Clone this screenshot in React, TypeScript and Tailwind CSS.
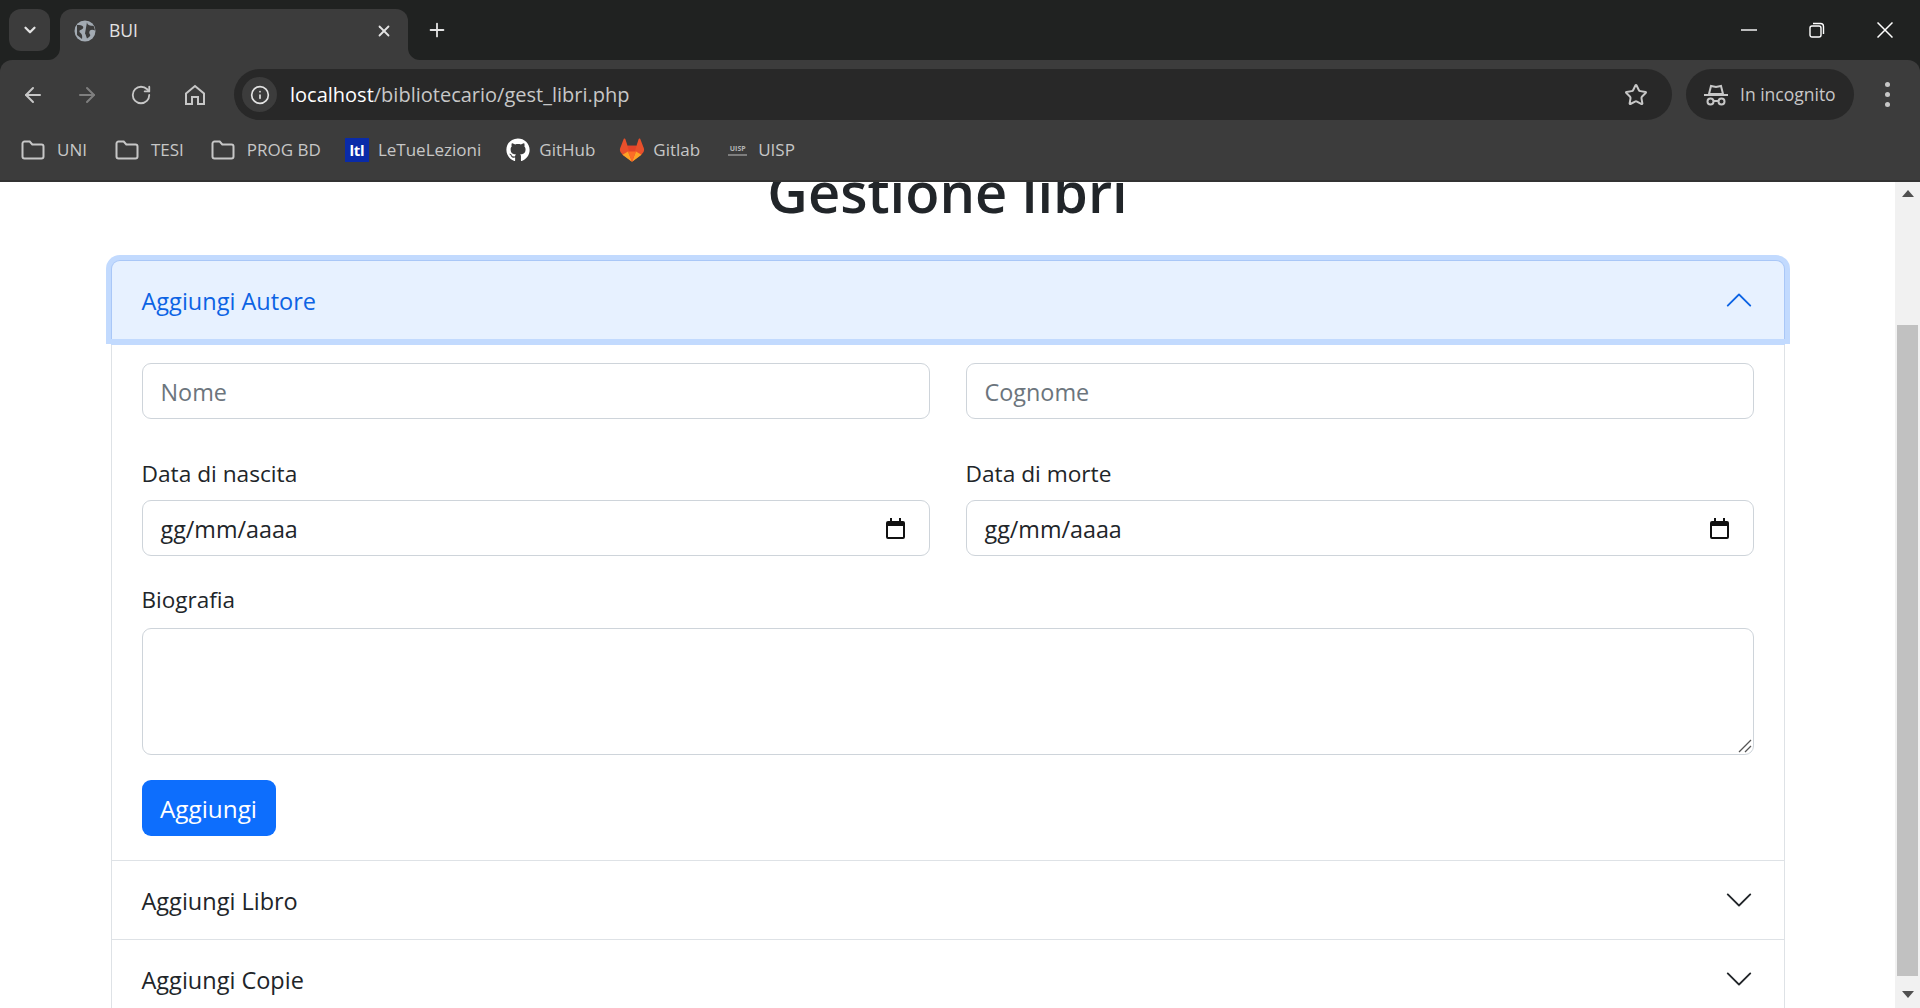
import { FaGithub } from 'react-icons/fa'
import { ArrowLeft, ArrowRight, RotateCw, Star, X, Plus, ChevronDown, Info } from 'lucide-react'

const ui = 'font-["Open_Sans","Liberation_Sans",sans-serif]'

function FolderIcon() {
  return (
    <svg width="24" height="20" viewBox="0 0 24 20" fill="none" stroke="#c7c7c7" strokeWidth="2">
      <path d="M1.5 3.5a2 2 0 0 1 2-2h5.2l2.6 3h9.2a2 2 0 0 1 2 2v10a2 2 0 0 1-2 2h-17a2 2 0 0 1-2-2z" />
    </svg>
  )
}

function Bookmark({ icon, label, className }: { icon: React.ReactNode; label: string; className?: string }) {
  return (
    <div className={`flex items-center ${className ?? ''}`}>
      {icon}
      <span className="pb-[2px] text-[17px] leading-none text-[#c7c7c7]">{label}</span>
    </div>
  )
}

function TabFlare({ side }: { side: 'left' | 'right' }) {
  return (
    <svg
      width="12"
      height="12"
      viewBox="0 0 12 12"
      fill="#3c3c3c"
      className={side === 'left' ? 'absolute -left-[12px] bottom-0' : 'absolute -right-[12px] bottom-0 -scale-x-100'}
    >
      <path d="M12 0v12H0A12 12 0 0 0 12 0z" />
    </svg>
  )
}

function BrowserChrome() {
  return (
    <div className={`w-full shrink-0 bg-[#202221] ${ui}`}>
      <div className="flex h-[60px] items-end pl-[9px]">
        <div className="mb-[9px] flex h-[42px] w-[41px] items-center justify-center rounded-xl bg-[#3c3c3c]">
          <ChevronDown size={18} strokeWidth={3} color="#e3e3e3" />
        </div>
        <div className="relative ml-[10px] flex h-[51px] w-[348px] items-center rounded-t-xl bg-[#3c3c3c] pb-[8px] pl-[14px] pr-[15px]">
          <TabFlare side="left" />
          <TabFlare side="right" />
          <svg width="22" height="22" viewBox="0 0 22 22">
            <circle cx="11" cy="11" r="10.500" fill="#a3abb3" />
            <path d="M3 5c3 0 5 0 6 1.500s-1 3-2.500 3.500S5 12 6.500 13s2 3 1.500 6L3 15z M13 2c0 2 1 3 3 3.500s3 0 4 1l1 4c-2-1-4-1-5 0s-1 3 0 4-1 3-3 4c-1-2-1-4-2-5" fill="#3c3c3c" />
          </svg>
          <span className="ml-[13px] text-[17.500px] leading-none text-[#e3e3e3]">BUI</span>
          <X size={18} strokeWidth={2.400} color="#e3e3e3" className="ml-auto" />
        </div>
        <Plus size={22} strokeWidth={2} color="#e3e3e3" className="mb-[19px] ml-[18px]" />
        <div className="mb-[22px] ml-auto flex items-center gap-[52px] pr-[27px]">
          <svg width="16" height="16" viewBox="0 0 16 16" stroke="#fff" strokeWidth="1.400"><path d="M0 8h16" /></svg>
          <svg width="16" height="16" viewBox="0 0 16 16" fill="none" stroke="#fff" strokeWidth="1.400">
            <rect x="1" y="4" width="11" height="11" rx="2" />
            <path d="M4 1.500h7.500a3 3 0 0 1 3 3V12" />
          </svg>
          <svg width="16" height="16" viewBox="0 0 16 16" stroke="#fff" strokeWidth="1.500"><path d="M.5.500l15 15M15.500.500l-15 15" /></svg>
        </div>
      </div>

      <div className="h-[122px] rounded-t-xl border-b-2 border-[#333] bg-[#3c3c3c]">
        <div className="flex h-[60px] items-center pl-[21px] pr-[30px] pt-[9px]">
          <ArrowLeft size={24} strokeWidth={2} color="#c7c7c7" />
          <ArrowRight size={24} strokeWidth={2} color="#7f7f7f" className="ml-[30px]" />
          <RotateCw size={22} strokeWidth={2} color="#c7c7c7" className="ml-[31px]" />
          <svg width="22" height="22" viewBox="0 0 22 22" fill="none" stroke="#c7c7c7" strokeWidth="2" className="ml-[32px]">
            <path d="M2 9.500 11 2l9 7.500V20h-6v-7H8v7H2z" />
          </svg>
          <div className="ml-[28px] flex h-[51px] w-[1438px] items-center rounded-full bg-[#282828] pl-[8px] pr-[24px]">
            <div className="flex size-[35px] items-center justify-center rounded-full bg-[#3c3c3c]">
              <Info size={20} strokeWidth={2} color="#e3e3e3" />
            </div>
            <span className="ml-[13px] text-[20px] leading-none text-[#c7c7c7]">
              <span className="text-[#fff]">localhost</span>/bibliotecario/gest_libri.php
            </span>
            <Star size={24} strokeWidth={2} color="#c7c7c7" className="ml-auto" />
          </div>
          <div className="ml-[14px] flex h-[51px] w-[168px] items-center rounded-full bg-[#282828] pl-[18px]">
            <svg width="24" height="22" viewBox="0 0 24 22" fill="none" stroke="#c7c7c7" strokeWidth="2">
              <path d="M0 11h24" />
              <path d="M5 10l2-8 5 1 5-1 2 8z" />
              <circle cx="6.500" cy="17.500" r="3" />
              <circle cx="17.500" cy="17.500" r="3" />
              <path d="M9.500 17h5" />
            </svg>
            <span className="ml-[12px] text-[17.500px] leading-none text-[#c7c7c7]">In incognito</span>
          </div>
          <div className="ml-auto flex flex-col gap-[5px]">
            <span className="size-[5px] rounded-full bg-[#c7c7c7]" />
            <span className="size-[5px] rounded-full bg-[#c7c7c7]" />
            <span className="size-[5px] rounded-full bg-[#c7c7c7]" />
          </div>
        </div>
        <div className="flex h-[60px] items-center pl-[21px]">
          <Bookmark icon={<FolderIcon />} label="UNI" className="gap-[12px]" />
          <Bookmark icon={<FolderIcon />} label="TESI" className="ml-[28px] gap-[12px]" />
          <Bookmark icon={<FolderIcon />} label="PROG BD" className="ml-[27px] gap-[12px]" />
          <Bookmark
            className="ml-[24px] gap-[9px]"
            label="LeTueLezioni"
            icon={
              <span className="flex size-[24px] items-center justify-center bg-[#0a2ba8] text-[15px] font-bold leading-none tracking-tight text-white">
                ltl
              </span>
            }
          />
          <Bookmark className="ml-[25px] gap-[9px]" label="GitHub" icon={<FaGithub size={24} color="#fff" />} />
          <Bookmark
            className="ml-[24px] gap-[8px]"
            label="Gitlab"
            icon={
              <svg width="26" height="24" viewBox="0 0 24 24">
                <path
                  d="m23.6 9.593-.033-.086L20.3.98a.851.851 0 0 0-.336-.405.875.875 0 0 0-1 .054.875.875 0 0 0-.29.44L16.47 7.818H7.537L5.333 1.07a.857.857 0 0 0-.29-.441.875.875 0 0 0-1-.054.859.859 0 0 0-.336.405L.433 9.502l-.032.086a6.066 6.066 0 0 0 2.012 7.01l.01.009.03.021 4.977 3.727 2.462 1.863 1.5 1.132a1.009 1.009 0 0 0 1.22 0l1.499-1.132 2.461-1.863 5.006-3.75.013-.01a6.068 6.068 0 0 0 2.01-7.002z"
                  fill="#e8502b"
                />
                <path d="M12 23.800 7.500 20.400 2.500 16.700 8 13.600z" fill="#fca326" />
                <path d="M12 23.800 16.500 20.400 21.500 16.700 16 13.600z" fill="#fca326" />
                <path d="M7.500 7.800h9L12 23.800z" fill="#e24329" />
                <path d="M12 23.800 8 13.600h8z" fill="#fc6d26" />
              </svg>
            }
          />
          <Bookmark
            className="ml-[26px] gap-[9px]"
            label="UISP"
            icon={
              <span className="flex h-[24px] w-[23px] flex-col items-center justify-center gap-[1px] font-bold text-[#b5b5b5]">
                <span className="text-[7px] leading-[8px]">UISP</span>
                <span className="h-[2px] w-[19px] bg-[#7d7d7d]" />
              </span>
            }
          />
        </div>
      </div>
    </div>
  )
}

function CalendarIcon() {
  return (
    <svg width="19" height="21" viewBox="0 0 19 21" fill="#111" className="ml-auto">
      <path d="M4 0h2v3h7V0h2v3h2a2 2 0 0 1 2 2v14a2 2 0 0 1-2 2H2a2 2 0 0 1-2-2V5a2 2 0 0 1 2-2h2zM2 8v11h15V8z" />
    </svg>
  )
}

function Field({ label, value }: { label: string; value: string }) {
  return (
    <div className="flex-1">
      <label className="mb-[8px] block text-[22.700px] leading-[36px] text-[#212529]">{label}</label>
      <div className="flex h-[56px] items-center rounded-[9px] border border-[#ced4da] bg-white pl-[18px] pr-[24px]">
        <span className="pt-[2px] text-[23.300px] text-[#212529]">{value}</span>
        <CalendarIcon />
      </div>
    </div>
  )
}

function PlaceholderInput({ placeholder }: { placeholder: string }) {
  return (
    <div className="flex h-[56px] flex-1 items-center rounded-[9px] border border-[#ced4da] bg-white pl-[18px]">
      <span className="pt-[4px] text-[23.400px] text-[#6c757d]">{placeholder}</span>
    </div>
  )
}

function Chevron({ color, up }: { color: string; up?: boolean }) {
  return (
    <svg width="30" height="30" viewBox="0 0 16 16" fill={color} className={up ? 'ml-auto rotate-180' : 'ml-auto'}>
      <path d="M1.646 4.646a.5.5 0 0 1 .708 0L8 10.293l5.646-5.647a.5.5 0 0 1 .708.708l-6 6a.5.5 0 0 1-.708 0l-6-6a.5.5 0 0 1 0-.708z" />
    </svg>
  )
}

function AccordionRow({ title }: { title: string }) {
  return (
    <div className="flex h-[79px] items-center border-t border-[#dee2e6] pl-[30px] pr-[30px]">
      <span className="pt-[4px] text-[23.500px] text-[#212529]">{title}</span>
      <Chevron color="#212529" />
    </div>
  )
}

function Scrollbar() {
  return (
    <div className="flex w-[25px] shrink-0 flex-col items-center bg-[#f1f1f1]">
      <div className="mt-[8px] h-0 w-0 border-x-[6px] border-b-[7px] border-x-transparent border-b-[#505050]" />
      <div className="mt-[128px] h-[651px] w-[21px] bg-[#c1c1c1]" />
      <div className="mt-[15px] h-0 w-0 border-x-[6px] border-t-[7px] border-x-transparent border-t-[#505050]" />
    </div>
  )
}

export default function App() {
  return (
    <div className={`flex h-screen w-full flex-col overflow-hidden bg-white ${ui}`}>
      <BrowserChrome />
      <div className="flex min-h-0 flex-1">
        <main className="min-w-0 flex-1 overflow-hidden">
          <h1 className="text-center text-[56px] font-semibold leading-[18px] text-[#212529]">Gestione libri</h1>
          <div className="mx-auto mt-[60px] w-[1674px] rounded-t-[9px] border-x border-[#dee2e6]">
            <div className="relative z-10 -mx-px flex h-[79px] items-center rounded-t-[9px] border-x border-t border-[#a9c7f7] bg-[#e7f1ff] pl-[30px] pr-[30px] shadow-[0_0_0_5px_#c2dafe,0_6px_0_0_#c2dafe]">
              <span className="pt-[4px] text-[23.500px] text-[#0c63e4]">Aggiungi Autore</span>
              <Chevron color="#0c63e4" up />
            </div>
            <div className="px-[30px] pb-[24px] pt-[24px]">
              <div className="flex gap-[36px]">
                <PlaceholderInput placeholder="Nome" />
                <PlaceholderInput placeholder="Cognome" />
              </div>
              <div className="mt-[37px] flex gap-[36px]">
                <Field label="Data di nascita" value="gg/mm/aaaa" />
                <Field label="Data di morte" value="gg/mm/aaaa" />
              </div>
              <label className="mb-[10px] mt-[26px] block text-[22.500px] leading-[36px] text-[#212529]">Biografia</label>
              <div className="relative">
                <textarea className="block h-[127px] w-full resize-none rounded-[9px] border border-[#ced4da] bg-white" />
                <svg width="14" height="14" viewBox="0 0 14 14" stroke="#555" strokeWidth="1.300" className="absolute bottom-[2px] right-[2px]">
                  <path d="M1 13 13 1M7 13l6-6" />
                </svg>
              </div>
              <button className="mt-[25px] block h-[56px] w-[134px] rounded-[9px] bg-[#0d6efd] pt-[2px] text-[24.300px] text-white">Aggiungi</button>
            </div>
            <AccordionRow title="Aggiungi Libro" />
            <AccordionRow title="Aggiungi Copie" />
          </div>
        </main>
        <Scrollbar />
      </div>
    </div>
  )
}
